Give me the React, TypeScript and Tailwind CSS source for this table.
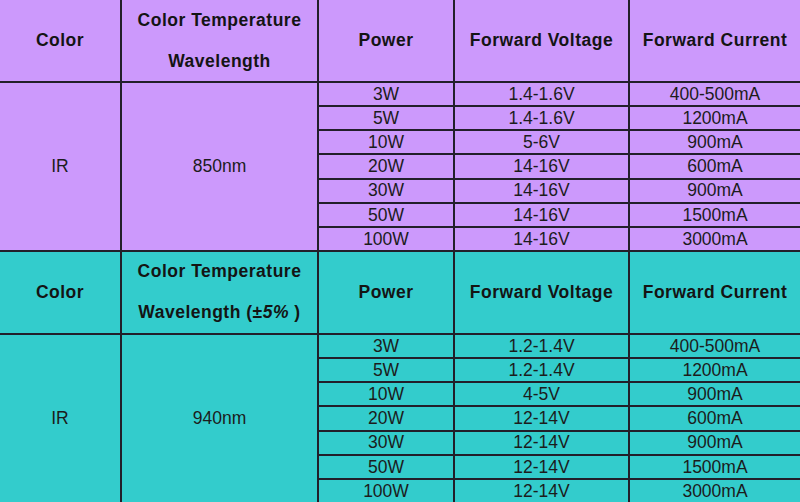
const sections = [
  {
    bg: "bg-[#cc99fc]",
    wavelength: "850nm",
    withTolerance: false,
    rows: [
      ["3W", "1.4-1.6V", "400-500mA"],
      ["5W", "1.4-1.6V", "1200mA"],
      ["10W", "5-6V", "900mA"],
      ["20W", "14-16V", "600mA"],
      ["30W", "14-16V", "900mA"],
      ["50W", "14-16V", "1500mA"],
      ["100W", "14-16V", "3000mA"],
    ],
  },
  {
    bg: "bg-[#33cccc]",
    wavelength: "940nm",
    withTolerance: true,
    rows: [
      ["3W", "1.2-1.4V", "400-500mA"],
      ["5W", "1.2-1.4V", "1200mA"],
      ["10W", "4-5V", "900mA"],
      ["20W", "12-14V", "600mA"],
      ["30W", "12-14V", "900mA"],
      ["50W", "12-14V", "1500mA"],
      ["100W", "12-14V", "3000mA"],
    ],
  },
];

const head =
  "flex items-center justify-center text-center font-bold text-[17.5px] tracking-[0.5px] text-[#141414]";
const cell =
  "flex items-center justify-center text-[17.5px] leading-none text-[#1c1c1c]";

export default function App() {
  return (
    <div
      className="w-[800px] h-[502px] overflow-hidden bg-white"
      style={{ fontFamily: '"Liberation Sans", Arial, sans-serif' }}
    >
      <div className="grid grid-cols-[120px_195px_134px_173px_1fr] grid-rows-[81px_repeat(7,22.15px)_81px_repeat(7,22.15px)] gap-[2px] bg-[#221f2a]">
        {sections.map((s) => (
          <Section key={s.wavelength} {...s} />
        ))}
      </div>
    </div>
  );
}

function Section({
  bg,
  wavelength,
  withTolerance,
  rows,
}: {
  bg: string;
  wavelength: string;
  withTolerance: boolean;
  rows: string[][];
}) {
  return (
    <>
      <div className={`${head} ${bg}`}>Color</div>
      <div className={`${head} ${bg} flex-col leading-[41px]`}>
        <span>Color Temperature</span>
        {withTolerance ? (
          <span>
            Wavelength (±<i>5%</i>&nbsp;)
          </span>
        ) : (
          <span>Wavelength</span>
        )}
      </div>
      <div className={`${head} ${bg}`}>Power</div>
      <div className={`${head} ${bg}`}>Forward Voltage</div>
      <div className={`${head} ${bg}`}>Forward Current</div>

      <div className={`${cell} ${bg} row-span-7`}>IR</div>
      <div className={`${cell} ${bg} row-span-7`}>{wavelength}</div>
      {rows.map((r) =>
        r.map((v, i) => (
          <div key={`${r[0]}-${i}`} className={`${cell} ${bg} pt-[1px]`}>
            {v}
          </div>
        ))
      )}
    </>
  );
}
